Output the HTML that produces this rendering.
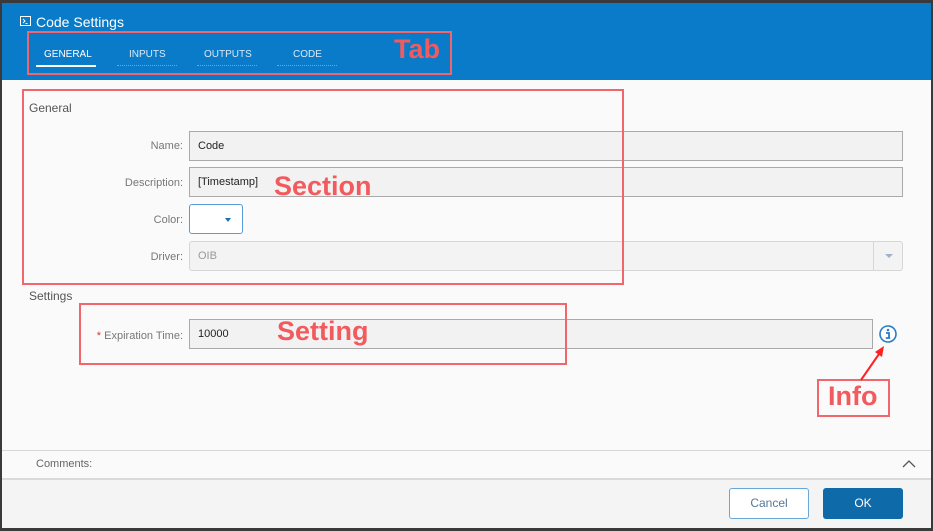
<!DOCTYPE html><html><head><style>
*{box-sizing:border-box;margin:0;padding:0}
body{width:933px;height:531px;background:#3a3a3a;font-family:"Liberation Sans",sans-serif;position:relative;overflow:hidden}
.a{position:absolute}
.dlg{left:2px;top:3px;width:929px;height:525px;background:#fafafa;overflow:hidden}
.hdr{left:0;top:0;width:929px;height:77px;background:#0a7bc9}
.lbl{font-size:11px;color:#777;text-align:right;width:160px;left:21px}
.inp{left:187px;width:714px;height:30px;border:1px solid #a9a9a9;background:#f2f2f2;font-size:11px;color:#222;padding:8px 8px}
.red{border:2px solid #f0666a}
.rt{color:#f25a5e;font-size:27px;font-weight:bold;font-family:"Liberation Sans",sans-serif}
.tab{font-size:10px;color:#dbe9f6;top:46px}
.dot{height:0;border-top:1px dotted #6fa8d8;top:62px}
</style></head><body>
<div class="a dlg">
<div class="a hdr">
<svg class="a" style="left:18px;top:13px" width="11" height="10"><rect x=".5" y=".5" width="10" height="9" fill="none" stroke="#fff"/><path d="M3 3l2 2-2 2M5.5 7.5h2" stroke="#fff" fill="none"/></svg>
<div class="a" style="left:34px;top:11px;color:#fff;font-size:14px">Code Settings</div>
<div class="a tab" style="left:42px;color:#fff">GENERAL</div>
<div class="a" style="left:34px;top:62px;width:60px;height:2px;background:#fff"></div>
<div class="a tab" style="left:127px">INPUTS</div><div class="a dot" style="left:115px;width:60px"></div>
<div class="a tab" style="left:202px">OUTPUTS</div><div class="a dot" style="left:195px;width:60px"></div>
<div class="a tab" style="left:291px">CODE</div><div class="a dot" style="left:275px;width:60px"></div>
</div>
<div class="a" style="left:27px;top:98px;font-size:12px;color:#555">General</div>
<div class="a lbl" style="top:137px">Name:</div>
<div class="a inp" style="top:128px">Code</div>
<div class="a lbl" style="top:174px">Description:</div>
<div class="a inp" style="top:164px">[Timestamp]</div>
<div class="a lbl" style="top:211px">Color:</div>
<div class="a" style="left:187px;top:201px;width:54px;height:30px;border:1px solid #5b9bd5;border-radius:3px;background:#fff"><div class="a" style="left:35px;top:13px;border:3px solid transparent;border-top:4px solid #1f6fb5"></div></div>
<div class="a lbl" style="top:248px">Driver:</div>
<div class="a inp" style="top:238px;border-color:#d6d6d6;color:#999;border-radius:3px;background:#f3f3f3">OIB<div class="a" style="right:28px;top:0;height:28px;border-left:1px solid #d6d6d6"></div><div class="a" style="right:9px;top:12px;border:4px solid transparent;border-top:4px solid #9bb4cc"></div></div>
<div class="a" style="left:27px;top:286px;font-size:12px;color:#555">Settings</div>
<div class="a lbl" style="top:327px"><span style="color:#d33">*</span> Expiration Time:</div>
<div class="a inp" style="top:316px;width:684px">10000</div>
<svg class="a" style="left:876px;top:321px" width="20" height="20"><circle cx="10" cy="10" r="8" fill="#fff" stroke="#2a7cc4" stroke-width="1.6"/><circle cx="10" cy="6" r="1.3" fill="#2a7cc4"/><path d="M8 9h3v5h1.2M7.8 14h4.4" stroke="#2a7cc4" stroke-width="1.8" fill="none"/></svg>
<div class="a" style="left:0;top:447px;width:929px;border-top:1px solid #d8d8d8"></div>
<div class="a" style="left:34px;top:455px;font-size:11px;color:#666">Comments:</div>
<svg class="a" style="left:900px;top:457px" width="14" height="8"><path d="M1 7l6-6 6 6" stroke="#555" fill="none" stroke-width="1.3"/></svg>
<div class="a" style="left:0;top:475px;width:929px;height:50px;background:#f4f4f4;border-top:2px solid #dadada"></div>
<div class="a" style="left:727px;top:485px;width:80px;height:31px;border:1px solid #6aa6d6;border-radius:3px;background:#fff;color:#55779a;font-size:12px;text-align:center;line-height:29px">Cancel</div>
<div class="a" style="left:821px;top:485px;width:80px;height:31px;border-radius:3px;background:#0e6aa8;color:#fff;font-size:12px;text-align:center;line-height:31px">OK</div>
</div>
<div class="a red" style="left:27px;top:31px;width:425px;height:44px"></div>
<div class="a rt" style="left:394px;top:34px">Tab</div>
<div class="a red" style="left:22px;top:89px;width:602px;height:196px"></div>
<div class="a rt" style="left:274px;top:171px">Section</div>
<div class="a red" style="left:79px;top:303px;width:488px;height:62px"></div>
<div class="a rt" style="left:277px;top:316px">Setting</div>
<div class="a red" style="left:817px;top:379px;width:73px;height:38px"></div>
<div class="a rt" style="left:828px;top:381px">Info</div>
<svg class="a" style="left:855px;top:340px" width="40" height="42"><path d="M6 40L24 14" stroke="#f22" stroke-width="2"/><path d="M29 6l-9 6 7 5z" fill="#f22"/></svg>
</body></html>
